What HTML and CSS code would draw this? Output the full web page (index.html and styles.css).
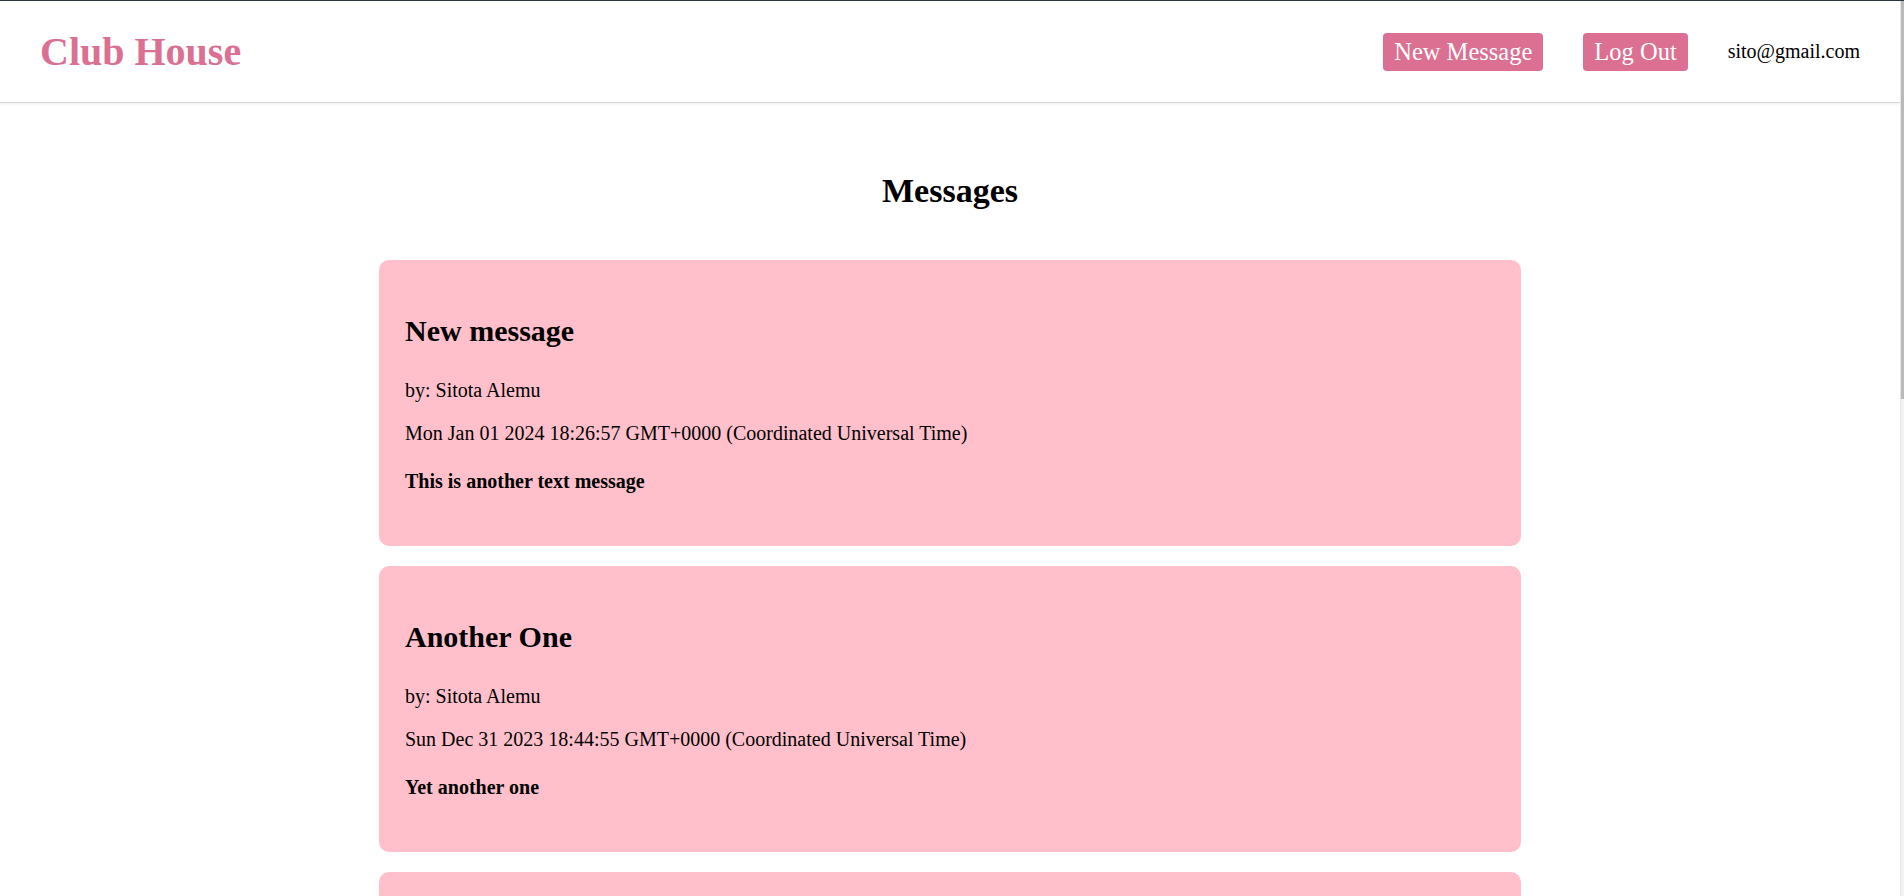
FILE: index.html
```html
<!DOCTYPE html>
<html lang="en">
<head>
<meta charset="utf-8">
<title>Club House</title>
<link rel="stylesheet" href="styles.css">
</head>
<body>
<div class="scroll-track"><div class="scroll-thumb"></div></div>
<div class="page">
<header class="topbar">
  <div class="brand">Club House</div>
  <nav class="nav">
    <a class="nav-btn" href="#">New Message</a>
    <a class="nav-btn" href="#">Log Out</a>
    <span class="nav-user">sito@gmail.com</span>
  </nav>
</header>
<main class="main">
  <h1 class="page-title">Messages</h1>
  <section class="list">
    <article class="card">
      <h2 class="card-title">New message</h2>
      <p class="card-meta">by: Sitota Alemu</p>
      <p class="card-meta">Mon Jan 01 2024 18:26:57 GMT+0000 (Coordinated Universal Time)</p>
      <h4 class="card-text">This is another text message</h4>
    </article>
    <article class="card">
      <h2 class="card-title">Another One</h2>
      <p class="card-meta">by: Sitota Alemu</p>
      <p class="card-meta">Sun Dec 31 2023 18:44:55 GMT+0000 (Coordinated Universal Time)</p>
      <h4 class="card-text">Yet another one</h4>
    </article>
    <article class="card">
      <h2 class="card-title">Hello</h2>
      <p class="card-meta">by: Sitota Alemu</p>
      <p class="card-meta">Sun Dec 31 2023 18:20:11 GMT+0000 (Coordinated Universal Time)</p>
      <h4 class="card-text">Hello everyone</h4>
    </article>
    <article class="card">
      <h2 class="card-title">First message</h2>
      <p class="card-meta">by: Sitota Alemu</p>
      <p class="card-meta">Sun Dec 31 2023 17:02:40 GMT+0000 (Coordinated Universal Time)</p>
      <h4 class="card-text">This is a text message</h4>
    </article>
    <article class="card">
      <h2 class="card-title">Welcome</h2>
      <p class="card-meta">by: Sitota Alemu</p>
      <p class="card-meta">Sun Dec 31 2023 16:45:03 GMT+0000 (Coordinated Universal Time)</p>
      <h4 class="card-text">Welcome to the club</h4>
    </article>
  </section>
</main>
</div>
</body>
</html>
```

FILE: styles.css
```css
body {
  margin: 0;
  font-family: "Liberation Serif", "Times New Roman", serif;
  font-size: 20px;
  color: #000;
  background: #fff;
  border-top: 1px solid #2c3742;
}

.page {
  margin-right: 4px;
}

.scroll-track {
  position: fixed;
  top: 1px;
  right: 0;
  bottom: 0;
  width: 3px;
  background: #f3f3f3;
  border-left: 1px solid #e6e6e6;
}

.scroll-thumb {
  height: 398px;
  background: #b9b9b9;
}

.topbar {
  box-sizing: border-box;
  height: 102px;
  display: flex;
  align-items: center;
  justify-content: space-between;
  padding: 0 40px;
  border-bottom: 1px solid #d6d6d6;
  box-shadow: 0 1px 3px rgba(0, 0, 0, 0.08);
}

.brand {
  font-size: 40px;
  font-weight: bold;
  color: #db7093;
}

.nav {
  display: flex;
  align-items: center;
  gap: 40px;
}

.nav-btn {
  display: block;
  font-size: 24.5px;
  line-height: 28px;
  padding: 5px 11px;
  color: #fff;
  background: #db7093;
  border-radius: 4px;
  text-decoration: none;
}

.nav-user {
  font-size: 20px;
}

.main {
  padding: 1px 0 60px;
}

.page-title {
  text-align: center;
  font-size: 34px;
  margin: 68px 0 50px;
}

.list {
  display: flex;
  flex-direction: column;
  align-items: center;
  gap: 20px;
}

.card {
  box-sizing: border-box;
  width: calc(60% + 2px);
  background: #ffc0cb;
  border-radius: 10px;
  padding: 3px 26px 1px;
  display: flow-root;
}

.card-title {
  font-size: 30px;
  margin: 51px 0 31px;
}

.card-meta {
  margin: 0 0 20px;
}

.card-text {
  font-size: 20px;
  margin: 25px 0 52px;
}
```
